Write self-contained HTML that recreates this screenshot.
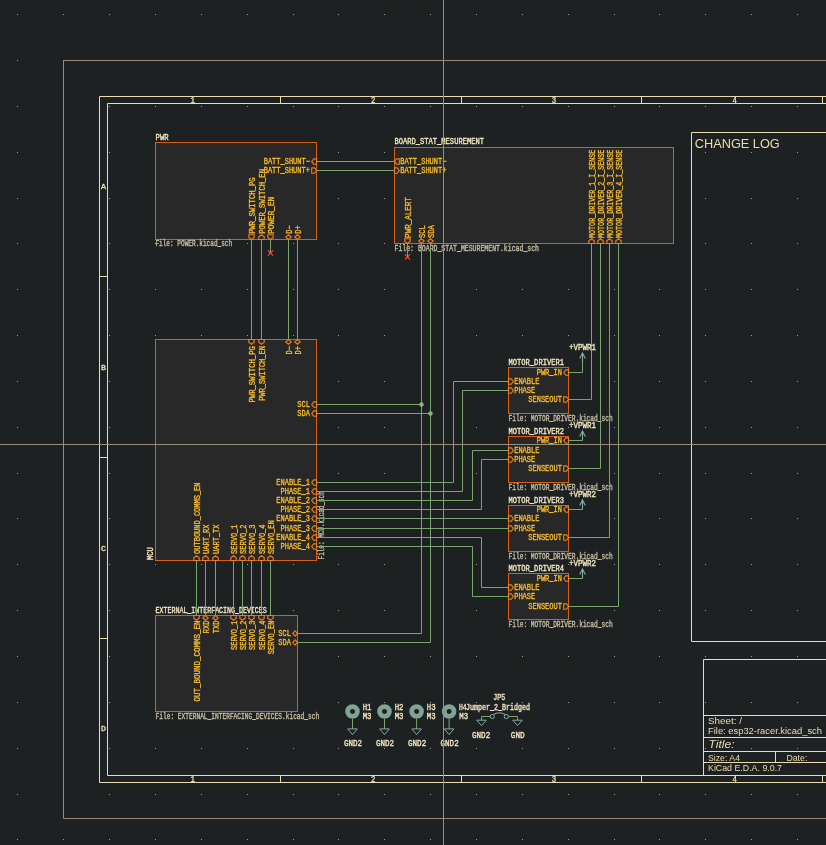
<!DOCTYPE html>
<html><head><meta charset="utf-8"><style>
html,body{margin:0;padding:0;background:#1d2122;overflow:hidden;width:826px;height:845px}
svg{display:block;will-change:transform}
</style></head><body>
<svg width="826" height="845" viewBox="0 0 826 845">
<rect x="0" y="0" width="826" height="845" fill="#1d2122"/>
<path d="M17,14h1v1h-1zM17,60h1v1h-1zM17,106h1v1h-1zM17,152h1v1h-1zM17,198h1v1h-1zM17,243h1v1h-1zM17,289h1v1h-1zM17,335h1v1h-1zM17,381h1v1h-1zM17,427h1v1h-1zM17,473h1v1h-1zM17,518h1v1h-1zM17,564h1v1h-1zM17,610h1v1h-1zM17,656h1v1h-1zM17,702h1v1h-1zM17,748h1v1h-1zM17,794h1v1h-1zM17,839h1v1h-1zM63,14h1v1h-1zM63,60h1v1h-1zM63,106h1v1h-1zM63,152h1v1h-1zM63,198h1v1h-1zM63,243h1v1h-1zM63,289h1v1h-1zM63,335h1v1h-1zM63,381h1v1h-1zM63,427h1v1h-1zM63,473h1v1h-1zM63,518h1v1h-1zM63,564h1v1h-1zM63,610h1v1h-1zM63,656h1v1h-1zM63,702h1v1h-1zM63,748h1v1h-1zM63,794h1v1h-1zM63,839h1v1h-1zM109,14h1v1h-1zM109,60h1v1h-1zM109,106h1v1h-1zM109,152h1v1h-1zM109,198h1v1h-1zM109,243h1v1h-1zM109,289h1v1h-1zM109,335h1v1h-1zM109,381h1v1h-1zM109,427h1v1h-1zM109,473h1v1h-1zM109,518h1v1h-1zM109,564h1v1h-1zM109,610h1v1h-1zM109,656h1v1h-1zM109,702h1v1h-1zM109,748h1v1h-1zM109,794h1v1h-1zM109,839h1v1h-1zM155,14h1v1h-1zM155,60h1v1h-1zM155,106h1v1h-1zM155,152h1v1h-1zM155,198h1v1h-1zM155,243h1v1h-1zM155,289h1v1h-1zM155,335h1v1h-1zM155,381h1v1h-1zM155,427h1v1h-1zM155,473h1v1h-1zM155,518h1v1h-1zM155,564h1v1h-1zM155,610h1v1h-1zM155,656h1v1h-1zM155,702h1v1h-1zM155,748h1v1h-1zM155,794h1v1h-1zM155,839h1v1h-1zM201,14h1v1h-1zM201,60h1v1h-1zM201,106h1v1h-1zM201,152h1v1h-1zM201,198h1v1h-1zM201,243h1v1h-1zM201,289h1v1h-1zM201,335h1v1h-1zM201,381h1v1h-1zM201,427h1v1h-1zM201,473h1v1h-1zM201,518h1v1h-1zM201,564h1v1h-1zM201,610h1v1h-1zM201,656h1v1h-1zM201,702h1v1h-1zM201,748h1v1h-1zM201,794h1v1h-1zM201,839h1v1h-1zM247,14h1v1h-1zM247,60h1v1h-1zM247,106h1v1h-1zM247,152h1v1h-1zM247,198h1v1h-1zM247,243h1v1h-1zM247,289h1v1h-1zM247,335h1v1h-1zM247,381h1v1h-1zM247,427h1v1h-1zM247,473h1v1h-1zM247,518h1v1h-1zM247,564h1v1h-1zM247,610h1v1h-1zM247,656h1v1h-1zM247,702h1v1h-1zM247,748h1v1h-1zM247,794h1v1h-1zM247,839h1v1h-1zM293,14h1v1h-1zM293,60h1v1h-1zM293,106h1v1h-1zM293,152h1v1h-1zM293,198h1v1h-1zM293,243h1v1h-1zM293,289h1v1h-1zM293,335h1v1h-1zM293,381h1v1h-1zM293,427h1v1h-1zM293,473h1v1h-1zM293,518h1v1h-1zM293,564h1v1h-1zM293,610h1v1h-1zM293,656h1v1h-1zM293,702h1v1h-1zM293,748h1v1h-1zM293,794h1v1h-1zM293,839h1v1h-1zM338,14h1v1h-1zM338,60h1v1h-1zM338,106h1v1h-1zM338,152h1v1h-1zM338,198h1v1h-1zM338,243h1v1h-1zM338,289h1v1h-1zM338,335h1v1h-1zM338,381h1v1h-1zM338,427h1v1h-1zM338,473h1v1h-1zM338,518h1v1h-1zM338,564h1v1h-1zM338,610h1v1h-1zM338,656h1v1h-1zM338,702h1v1h-1zM338,748h1v1h-1zM338,794h1v1h-1zM338,839h1v1h-1zM384,14h1v1h-1zM384,60h1v1h-1zM384,106h1v1h-1zM384,152h1v1h-1zM384,198h1v1h-1zM384,243h1v1h-1zM384,289h1v1h-1zM384,335h1v1h-1zM384,381h1v1h-1zM384,427h1v1h-1zM384,473h1v1h-1zM384,518h1v1h-1zM384,564h1v1h-1zM384,610h1v1h-1zM384,656h1v1h-1zM384,702h1v1h-1zM384,748h1v1h-1zM384,794h1v1h-1zM384,839h1v1h-1zM430,14h1v1h-1zM430,60h1v1h-1zM430,106h1v1h-1zM430,152h1v1h-1zM430,198h1v1h-1zM430,243h1v1h-1zM430,289h1v1h-1zM430,335h1v1h-1zM430,381h1v1h-1zM430,427h1v1h-1zM430,473h1v1h-1zM430,518h1v1h-1zM430,564h1v1h-1zM430,610h1v1h-1zM430,656h1v1h-1zM430,702h1v1h-1zM430,748h1v1h-1zM430,794h1v1h-1zM430,839h1v1h-1zM476,14h1v1h-1zM476,60h1v1h-1zM476,106h1v1h-1zM476,152h1v1h-1zM476,198h1v1h-1zM476,243h1v1h-1zM476,289h1v1h-1zM476,335h1v1h-1zM476,381h1v1h-1zM476,427h1v1h-1zM476,473h1v1h-1zM476,518h1v1h-1zM476,564h1v1h-1zM476,610h1v1h-1zM476,656h1v1h-1zM476,702h1v1h-1zM476,748h1v1h-1zM476,794h1v1h-1zM476,839h1v1h-1zM522,14h1v1h-1zM522,60h1v1h-1zM522,106h1v1h-1zM522,152h1v1h-1zM522,198h1v1h-1zM522,243h1v1h-1zM522,289h1v1h-1zM522,335h1v1h-1zM522,381h1v1h-1zM522,427h1v1h-1zM522,473h1v1h-1zM522,518h1v1h-1zM522,564h1v1h-1zM522,610h1v1h-1zM522,656h1v1h-1zM522,702h1v1h-1zM522,748h1v1h-1zM522,794h1v1h-1zM522,839h1v1h-1zM568,14h1v1h-1zM568,60h1v1h-1zM568,106h1v1h-1zM568,152h1v1h-1zM568,198h1v1h-1zM568,243h1v1h-1zM568,289h1v1h-1zM568,335h1v1h-1zM568,381h1v1h-1zM568,427h1v1h-1zM568,473h1v1h-1zM568,518h1v1h-1zM568,564h1v1h-1zM568,610h1v1h-1zM568,656h1v1h-1zM568,702h1v1h-1zM568,748h1v1h-1zM568,794h1v1h-1zM568,839h1v1h-1zM614,14h1v1h-1zM614,60h1v1h-1zM614,106h1v1h-1zM614,152h1v1h-1zM614,198h1v1h-1zM614,243h1v1h-1zM614,289h1v1h-1zM614,335h1v1h-1zM614,381h1v1h-1zM614,427h1v1h-1zM614,473h1v1h-1zM614,518h1v1h-1zM614,564h1v1h-1zM614,610h1v1h-1zM614,656h1v1h-1zM614,702h1v1h-1zM614,748h1v1h-1zM614,794h1v1h-1zM614,839h1v1h-1zM659,14h1v1h-1zM659,60h1v1h-1zM659,106h1v1h-1zM659,152h1v1h-1zM659,198h1v1h-1zM659,243h1v1h-1zM659,289h1v1h-1zM659,335h1v1h-1zM659,381h1v1h-1zM659,427h1v1h-1zM659,473h1v1h-1zM659,518h1v1h-1zM659,564h1v1h-1zM659,610h1v1h-1zM659,656h1v1h-1zM659,702h1v1h-1zM659,748h1v1h-1zM659,794h1v1h-1zM659,839h1v1h-1zM705,14h1v1h-1zM705,60h1v1h-1zM705,106h1v1h-1zM705,152h1v1h-1zM705,198h1v1h-1zM705,243h1v1h-1zM705,289h1v1h-1zM705,335h1v1h-1zM705,381h1v1h-1zM705,427h1v1h-1zM705,473h1v1h-1zM705,518h1v1h-1zM705,564h1v1h-1zM705,610h1v1h-1zM705,656h1v1h-1zM705,702h1v1h-1zM705,748h1v1h-1zM705,794h1v1h-1zM705,839h1v1h-1zM751,14h1v1h-1zM751,60h1v1h-1zM751,106h1v1h-1zM751,152h1v1h-1zM751,198h1v1h-1zM751,243h1v1h-1zM751,289h1v1h-1zM751,335h1v1h-1zM751,381h1v1h-1zM751,427h1v1h-1zM751,473h1v1h-1zM751,518h1v1h-1zM751,564h1v1h-1zM751,610h1v1h-1zM751,656h1v1h-1zM751,702h1v1h-1zM751,748h1v1h-1zM751,794h1v1h-1zM751,839h1v1h-1zM797,14h1v1h-1zM797,60h1v1h-1zM797,106h1v1h-1zM797,152h1v1h-1zM797,198h1v1h-1zM797,243h1v1h-1zM797,289h1v1h-1zM797,335h1v1h-1zM797,381h1v1h-1zM797,427h1v1h-1zM797,473h1v1h-1zM797,518h1v1h-1zM797,564h1v1h-1zM797,610h1v1h-1zM797,656h1v1h-1zM797,702h1v1h-1zM797,748h1v1h-1zM797,794h1v1h-1zM797,839h1v1h-1z" fill="#a89d88"/>
<polyline points="900,60.5 63.5,60.5 63.5,818.5 900,818.5" stroke="#978a7a" stroke-width="1.0" fill="none" stroke-linejoin="miter"/>
<polyline points="900,96.5 99.5,96.5 99.5,782.5 900,782.5" stroke="#ecdcb0" stroke-width="1.0" fill="none" stroke-linejoin="miter"/>
<polyline points="900,103.5 107.5,103.5 107.5,775.5 900,775.5" stroke="#ecdcb0" stroke-width="1.0" fill="none" stroke-linejoin="miter"/>
<line x1="280.5" y1="96.5" x2="280.5" y2="103.5" stroke="#ecdcb0" stroke-width="1.0"/>
<line x1="280.5" y1="775.5" x2="280.5" y2="782.5" stroke="#ecdcb0" stroke-width="1.0"/>
<line x1="461.5" y1="96.5" x2="461.5" y2="103.5" stroke="#ecdcb0" stroke-width="1.0"/>
<line x1="461.5" y1="775.5" x2="461.5" y2="782.5" stroke="#ecdcb0" stroke-width="1.0"/>
<line x1="641.5" y1="96.5" x2="641.5" y2="103.5" stroke="#ecdcb0" stroke-width="1.0"/>
<line x1="641.5" y1="775.5" x2="641.5" y2="782.5" stroke="#ecdcb0" stroke-width="1.0"/>
<line x1="822.5" y1="96.5" x2="822.5" y2="103.5" stroke="#ecdcb0" stroke-width="1.0"/>
<line x1="822.5" y1="775.5" x2="822.5" y2="782.5" stroke="#ecdcb0" stroke-width="1.0"/>
<line x1="99.5" y1="276.5" x2="107.5" y2="276.5" stroke="#ecdcb0" stroke-width="1.0"/>
<line x1="99.5" y1="457.5" x2="107.5" y2="457.5" stroke="#ecdcb0" stroke-width="1.0"/>
<line x1="99.5" y1="638.5" x2="107.5" y2="638.5" stroke="#ecdcb0" stroke-width="1.0"/>
<text x="192.6" y="102.9" fill="#ecdcb0" stroke="#ecdcb0" stroke-width="0.35" font-family="Liberation Mono" font-size="8.2" font-weight="normal" font-style="normal" text-anchor="middle" textLength="4.4" lengthAdjust="spacingAndGlyphs">1</text>
<text x="192.6" y="781.9" fill="#ecdcb0" stroke="#ecdcb0" stroke-width="0.35" font-family="Liberation Mono" font-size="8.2" font-weight="normal" font-style="normal" text-anchor="middle" textLength="4.4" lengthAdjust="spacingAndGlyphs">1</text>
<text x="373.1" y="102.9" fill="#ecdcb0" stroke="#ecdcb0" stroke-width="0.35" font-family="Liberation Mono" font-size="8.2" font-weight="normal" font-style="normal" text-anchor="middle" textLength="4.4" lengthAdjust="spacingAndGlyphs">2</text>
<text x="373.1" y="781.9" fill="#ecdcb0" stroke="#ecdcb0" stroke-width="0.35" font-family="Liberation Mono" font-size="8.2" font-weight="normal" font-style="normal" text-anchor="middle" textLength="4.4" lengthAdjust="spacingAndGlyphs">2</text>
<text x="553.9" y="102.9" fill="#ecdcb0" stroke="#ecdcb0" stroke-width="0.35" font-family="Liberation Mono" font-size="8.2" font-weight="normal" font-style="normal" text-anchor="middle" textLength="4.4" lengthAdjust="spacingAndGlyphs">3</text>
<text x="553.9" y="781.9" fill="#ecdcb0" stroke="#ecdcb0" stroke-width="0.35" font-family="Liberation Mono" font-size="8.2" font-weight="normal" font-style="normal" text-anchor="middle" textLength="4.4" lengthAdjust="spacingAndGlyphs">3</text>
<text x="734.6" y="102.9" fill="#ecdcb0" stroke="#ecdcb0" stroke-width="0.35" font-family="Liberation Mono" font-size="8.2" font-weight="normal" font-style="normal" text-anchor="middle" textLength="4.4" lengthAdjust="spacingAndGlyphs">4</text>
<text x="734.6" y="781.9" fill="#ecdcb0" stroke="#ecdcb0" stroke-width="0.35" font-family="Liberation Mono" font-size="8.2" font-weight="normal" font-style="normal" text-anchor="middle" textLength="4.4" lengthAdjust="spacingAndGlyphs">4</text>
<text x="103.5" y="189.2" fill="#ecdcb0" stroke="#ecdcb0" stroke-width="0.35" font-family="Liberation Mono" font-size="7.8" font-weight="normal" font-style="normal" text-anchor="middle" textLength="5" lengthAdjust="spacingAndGlyphs">A</text>
<text x="103.5" y="369.5" fill="#ecdcb0" stroke="#ecdcb0" stroke-width="0.35" font-family="Liberation Mono" font-size="7.8" font-weight="normal" font-style="normal" text-anchor="middle" textLength="5" lengthAdjust="spacingAndGlyphs">B</text>
<text x="103.5" y="550.5" fill="#ecdcb0" stroke="#ecdcb0" stroke-width="0.35" font-family="Liberation Mono" font-size="7.8" font-weight="normal" font-style="normal" text-anchor="middle" textLength="5" lengthAdjust="spacingAndGlyphs">C</text>
<text x="103.5" y="731" fill="#ecdcb0" stroke="#ecdcb0" stroke-width="0.35" font-family="Liberation Mono" font-size="7.8" font-weight="normal" font-style="normal" text-anchor="middle" textLength="5" lengthAdjust="spacingAndGlyphs">D</text>
<polyline points="900,132.5 691.5,132.5 691.5,641.5 900,641.5" stroke="#ecdcb0" stroke-width="1.0" fill="none" stroke-linejoin="miter"/>
<text x="694.8" y="148" fill="#ecdcb0" font-family="Liberation Sans" font-size="13.5" font-weight="normal" font-style="normal" text-anchor="start" textLength="85" lengthAdjust="spacingAndGlyphs">CHANGE LOG</text>
<polyline points="900,659.5 703.5,659.5 703.5,775.5" stroke="#ecdcb0" stroke-width="1.0" fill="none" stroke-linejoin="miter"/>
<line x1="703.5" y1="715.5" x2="900" y2="715.5" stroke="#ecdcb0" stroke-width="1.0"/>
<line x1="703.5" y1="737.5" x2="900" y2="737.5" stroke="#ecdcb0" stroke-width="1.0"/>
<line x1="703.5" y1="751.5" x2="900" y2="751.5" stroke="#ecdcb0" stroke-width="1.0"/>
<line x1="703.5" y1="762.5" x2="900" y2="762.5" stroke="#ecdcb0" stroke-width="1.0"/>
<line x1="775.5" y1="751.5" x2="775.5" y2="762.5" stroke="#ecdcb0" stroke-width="1.0"/>
<text x="708" y="724.1" fill="#ecdcb0" font-family="Liberation Sans" font-size="8.3" font-weight="normal" font-style="normal" text-anchor="start" textLength="34" lengthAdjust="spacingAndGlyphs">Sheet: /</text>
<text x="708" y="733.9" fill="#ecdcb0" font-family="Liberation Sans" font-size="8.3" font-weight="normal" font-style="normal" text-anchor="start" textLength="114" lengthAdjust="spacingAndGlyphs">File: esp32-racer.kicad_sch</text>
<text x="708.5" y="748" fill="#ecdcb0" font-family="Liberation Sans" font-size="11.5" font-weight="normal" font-style="italic" text-anchor="start" textLength="26" lengthAdjust="spacingAndGlyphs">Title:</text>
<text x="708" y="760.8" fill="#ecdcb0" font-family="Liberation Sans" font-size="8.3" font-weight="normal" font-style="normal" text-anchor="start" textLength="32" lengthAdjust="spacingAndGlyphs">Size: A4</text>
<text x="786.4" y="760.8" fill="#ecdcb0" font-family="Liberation Sans" font-size="8.3" font-weight="normal" font-style="normal" text-anchor="start" textLength="21" lengthAdjust="spacingAndGlyphs">Date:</text>
<text x="708" y="770.8" fill="#ecdcb0" font-family="Liberation Sans" font-size="8.3" font-weight="normal" font-style="normal" text-anchor="start" textLength="74" lengthAdjust="spacingAndGlyphs">KiCad E.D.A. 9.0.7</text>
<rect x="155.5" y="142.5" width="161" height="97" stroke="#d95e0f" stroke-width="1.0" fill="#282828"/>
<text x="155.6" y="140" fill="#f2e6c2" stroke="#f2e6c2" stroke-width="0.35" font-family="Liberation Mono" font-size="8.6" font-weight="normal" font-style="normal" text-anchor="start" textLength="12.9" lengthAdjust="spacingAndGlyphs">PWR</text>
<text x="155.4" y="246.2" fill="#c8bea2" stroke="#c8bea2" stroke-width="0.35" font-family="Liberation Mono" font-size="8.6" font-weight="normal" font-style="normal" text-anchor="start" textLength="76.8" lengthAdjust="spacingAndGlyphs">File: POWER.kicad_sch</text>
<polygon points="316.5,158.8 313.72,158.8 311.7,161.5 313.72,164.2 316.5,164.2" stroke="#f07c1c" stroke-width="1.15" fill="none" stroke-linejoin="miter"/>
<text x="309.9" y="164.1" fill="#f8bc2c" stroke="#f8bc2c" stroke-width="0.35" font-family="Liberation Mono" font-size="8.6" font-weight="normal" font-style="normal" text-anchor="end" textLength="46.2" lengthAdjust="spacingAndGlyphs">BATT_SHUNT−</text>
<polygon points="311.7,167.8 314.48,167.8 316.5,170.5 314.48,173.2 311.7,173.2" stroke="#f07c1c" stroke-width="1.15" fill="none" stroke-linejoin="miter"/>
<text x="309.9" y="173.1" fill="#f8bc2c" stroke="#f8bc2c" stroke-width="0.35" font-family="Liberation Mono" font-size="8.6" font-weight="normal" font-style="normal" text-anchor="end" textLength="46.2" lengthAdjust="spacingAndGlyphs">BATT_SHUNT+</text>
<polygon points="248.8,234.7 248.8,237.48 251.5,239.5 254.2,237.48 254.2,234.7" stroke="#f07c1c" stroke-width="1.15" fill="none" stroke-linejoin="miter"/>
<text x="254.8" y="233.8" fill="#f8bc2c" stroke="#f8bc2c" stroke-width="0.35" font-family="Liberation Mono" font-size="8.6" font-weight="normal" font-style="normal" text-anchor="start" textLength="56.4" lengthAdjust="spacingAndGlyphs" transform="rotate(-90 254.8 233.8)">PWR_SWITCH_PG</text>
<polygon points="258.8,239.5 258.8,236.72 261.5,234.7 264.2,236.72 264.2,239.5" stroke="#f07c1c" stroke-width="1.15" fill="none" stroke-linejoin="miter"/>
<text x="264.8" y="233.8" fill="#f8bc2c" stroke="#f8bc2c" stroke-width="0.35" font-family="Liberation Mono" font-size="8.6" font-weight="normal" font-style="normal" text-anchor="start" textLength="64.8" lengthAdjust="spacingAndGlyphs" transform="rotate(-90 264.8 233.8)">POWER_SWITCH_EN</text>
<polygon points="267.8,234.7 267.8,237.48 270.5,239.5 273.2,237.48 273.2,234.7" stroke="#f07c1c" stroke-width="1.15" fill="none" stroke-linejoin="miter"/>
<text x="273.8" y="233.8" fill="#f8bc2c" stroke="#f8bc2c" stroke-width="0.35" font-family="Liberation Mono" font-size="8.6" font-weight="normal" font-style="normal" text-anchor="start" textLength="37" lengthAdjust="spacingAndGlyphs" transform="rotate(-90 273.8 233.8)">POWER_EN</text>
<polygon points="288.5,239.5 285.8,237.1 288.5,234.7 291.2,237.1" stroke="#f07c1c" stroke-width="1.15" fill="none" stroke-linejoin="miter"/>
<text x="291.8" y="233.8" fill="#f8bc2c" stroke="#f8bc2c" stroke-width="0.35" font-family="Liberation Mono" font-size="8.6" font-weight="normal" font-style="normal" text-anchor="start" textLength="8.4" lengthAdjust="spacingAndGlyphs" transform="rotate(-90 291.8 233.8)">D−</text>
<polygon points="297.5,239.5 294.8,237.1 297.5,234.7 300.2,237.1" stroke="#f07c1c" stroke-width="1.15" fill="none" stroke-linejoin="miter"/>
<text x="300.8" y="233.8" fill="#f8bc2c" stroke="#f8bc2c" stroke-width="0.35" font-family="Liberation Mono" font-size="8.6" font-weight="normal" font-style="normal" text-anchor="start" textLength="8.4" lengthAdjust="spacingAndGlyphs" transform="rotate(-90 300.8 233.8)">D+</text>
<rect x="394.5" y="147.5" width="279" height="96" stroke="#d95e0f" stroke-width="1.0" fill="#282828"/>
<text x="394.5" y="144.2" fill="#f2e6c2" stroke="#f2e6c2" stroke-width="0.35" font-family="Liberation Mono" font-size="8.6" font-weight="normal" font-style="normal" text-anchor="start" textLength="89.46" lengthAdjust="spacingAndGlyphs">BOARD_STAT_MESUREMENT</text>
<text x="394.5" y="250.6" fill="#c8bea2" stroke="#c8bea2" stroke-width="0.35" font-family="Liberation Mono" font-size="8.6" font-weight="normal" font-style="normal" text-anchor="start" textLength="144.5" lengthAdjust="spacingAndGlyphs">File: BOARD_STAT_MESUREMENT.kicad_sch</text>
<polygon points="399.3,158.8 396.52,158.8 394.5,161.5 396.52,164.2 399.3,164.2" stroke="#f07c1c" stroke-width="1.15" fill="none" stroke-linejoin="miter"/>
<text x="400.2" y="164.1" fill="#f8bc2c" stroke="#f8bc2c" stroke-width="0.35" font-family="Liberation Mono" font-size="8.6" font-weight="normal" font-style="normal" text-anchor="start" textLength="46.2" lengthAdjust="spacingAndGlyphs">BATT_SHUNT−</text>
<polygon points="394.5,167.8 397.28,167.8 399.3,170.5 397.28,173.2 394.5,173.2" stroke="#f07c1c" stroke-width="1.15" fill="none" stroke-linejoin="miter"/>
<text x="400.2" y="173.1" fill="#f8bc2c" stroke="#f8bc2c" stroke-width="0.35" font-family="Liberation Mono" font-size="8.6" font-weight="normal" font-style="normal" text-anchor="start" textLength="46.2" lengthAdjust="spacingAndGlyphs">BATT_SHUNT+</text>
<polygon points="404.8,238.7 404.8,241.48 407.5,243.5 410.2,241.48 410.2,238.7" stroke="#f07c1c" stroke-width="1.15" fill="none" stroke-linejoin="miter"/>
<text x="410.8" y="237.9" fill="#f8bc2c" stroke="#f8bc2c" stroke-width="0.35" font-family="Liberation Mono" font-size="8.6" font-weight="normal" font-style="normal" text-anchor="start" textLength="40.8" lengthAdjust="spacingAndGlyphs" transform="rotate(-90 410.8 237.9)">PWR_ALERT</text>
<polygon points="421.5,243.5 418.8,241.1 421.5,238.7 424.2,241.1" stroke="#f07c1c" stroke-width="1.15" fill="none" stroke-linejoin="miter"/>
<text x="424.8" y="237.9" fill="#f8bc2c" stroke="#f8bc2c" stroke-width="0.35" font-family="Liberation Mono" font-size="8.6" font-weight="normal" font-style="normal" text-anchor="start" textLength="12.6" lengthAdjust="spacingAndGlyphs" transform="rotate(-90 424.8 237.9)">SCL</text>
<polygon points="430.5,243.5 427.8,241.1 430.5,238.7 433.2,241.1" stroke="#f07c1c" stroke-width="1.15" fill="none" stroke-linejoin="miter"/>
<text x="433.8" y="237.9" fill="#f8bc2c" stroke="#f8bc2c" stroke-width="0.35" font-family="Liberation Mono" font-size="8.6" font-weight="normal" font-style="normal" text-anchor="start" textLength="12.6" lengthAdjust="spacingAndGlyphs" transform="rotate(-90 433.8 237.9)">SDA</text>
<polygon points="588.8,243.5 588.8,240.72 591.5,238.7 594.2,240.72 594.2,243.5" stroke="#f07c1c" stroke-width="1.15" fill="none" stroke-linejoin="miter"/>
<text x="594.8" y="237.9" fill="#f8bc2c" stroke="#f8bc2c" stroke-width="0.35" font-family="Liberation Mono" font-size="8.6" font-weight="normal" font-style="normal" text-anchor="start" textLength="88.2" lengthAdjust="spacingAndGlyphs" transform="rotate(-90 594.8 237.9)">MOTOR_DRIVER_1_I_SENSE</text>
<polygon points="597.8,243.5 597.8,240.72 600.5,238.7 603.2,240.72 603.2,243.5" stroke="#f07c1c" stroke-width="1.15" fill="none" stroke-linejoin="miter"/>
<text x="603.8" y="237.9" fill="#f8bc2c" stroke="#f8bc2c" stroke-width="0.35" font-family="Liberation Mono" font-size="8.6" font-weight="normal" font-style="normal" text-anchor="start" textLength="88.2" lengthAdjust="spacingAndGlyphs" transform="rotate(-90 603.8 237.9)">MOTOR_DRIVER_2_I_SENSE</text>
<polygon points="606.8,243.5 606.8,240.72 609.5,238.7 612.2,240.72 612.2,243.5" stroke="#f07c1c" stroke-width="1.15" fill="none" stroke-linejoin="miter"/>
<text x="612.8" y="237.9" fill="#f8bc2c" stroke="#f8bc2c" stroke-width="0.35" font-family="Liberation Mono" font-size="8.6" font-weight="normal" font-style="normal" text-anchor="start" textLength="88.2" lengthAdjust="spacingAndGlyphs" transform="rotate(-90 612.8 237.9)">MOTOR_DRIVER_3_I_SENSE</text>
<polygon points="615.8,243.5 615.8,240.72 618.5,238.7 621.2,240.72 621.2,243.5" stroke="#f07c1c" stroke-width="1.15" fill="none" stroke-linejoin="miter"/>
<text x="621.8" y="237.9" fill="#f8bc2c" stroke="#f8bc2c" stroke-width="0.35" font-family="Liberation Mono" font-size="8.6" font-weight="normal" font-style="normal" text-anchor="start" textLength="88.2" lengthAdjust="spacingAndGlyphs" transform="rotate(-90 621.8 237.9)">MOTOR_DRIVER_4_I_SENSE</text>
<rect x="155.5" y="339.5" width="161" height="221" stroke="#d95e0f" stroke-width="1.0" fill="#282828"/>
<text x="153.2" y="560" fill="#f2e6c2" stroke="#f2e6c2" stroke-width="0.35" font-family="Liberation Mono" font-size="8.6" font-weight="normal" font-style="normal" text-anchor="start" textLength="12.9" lengthAdjust="spacingAndGlyphs" transform="rotate(-90 153.2 560)">MCU</text>
<text x="323.6" y="559.4" fill="#c8bea2" stroke="#c8bea2" stroke-width="0.35" font-family="Liberation Mono" font-size="8.6" font-weight="normal" font-style="normal" text-anchor="start" textLength="68.2" lengthAdjust="spacingAndGlyphs" transform="rotate(-90 323.6 559.4)">File: MCU.kicad_sch</text>
<polygon points="248.8,339.5 248.8,342.28 251.5,344.3 254.2,342.28 254.2,339.5" stroke="#f07c1c" stroke-width="1.15" fill="none" stroke-linejoin="miter"/>
<text x="254.8" y="346.1" fill="#f8bc2c" stroke="#f8bc2c" stroke-width="0.35" font-family="Liberation Mono" font-size="8.6" font-weight="normal" font-style="normal" text-anchor="end" textLength="56.4" lengthAdjust="spacingAndGlyphs" transform="rotate(-90 254.8 346.1)">PWR_SWITCH_PG</text>
<polygon points="258.8,339.5 258.8,342.28 261.5,344.3 264.2,342.28 264.2,339.5" stroke="#f07c1c" stroke-width="1.15" fill="none" stroke-linejoin="miter"/>
<text x="264.8" y="346.1" fill="#f8bc2c" stroke="#f8bc2c" stroke-width="0.35" font-family="Liberation Mono" font-size="8.6" font-weight="normal" font-style="normal" text-anchor="end" textLength="54.6" lengthAdjust="spacingAndGlyphs" transform="rotate(-90 264.8 346.1)">PWR_SWITCH_EN</text>
<polygon points="288.5,339.5 285.8,341.9 288.5,344.3 291.2,341.9" stroke="#f07c1c" stroke-width="1.15" fill="none" stroke-linejoin="miter"/>
<text x="291.8" y="346.1" fill="#f8bc2c" stroke="#f8bc2c" stroke-width="0.35" font-family="Liberation Mono" font-size="8.6" font-weight="normal" font-style="normal" text-anchor="end" textLength="8.4" lengthAdjust="spacingAndGlyphs" transform="rotate(-90 291.8 346.1)">D−</text>
<polygon points="297.5,339.5 294.8,341.9 297.5,344.3 300.2,341.9" stroke="#f07c1c" stroke-width="1.15" fill="none" stroke-linejoin="miter"/>
<text x="300.8" y="346.1" fill="#f8bc2c" stroke="#f8bc2c" stroke-width="0.35" font-family="Liberation Mono" font-size="8.6" font-weight="normal" font-style="normal" text-anchor="end" textLength="8.4" lengthAdjust="spacingAndGlyphs" transform="rotate(-90 300.8 346.1)">D+</text>
<polygon points="316.5,401.8 313.72,401.8 311.7,404.5 313.72,407.2 316.5,407.2" stroke="#f07c1c" stroke-width="1.15" fill="none" stroke-linejoin="miter"/>
<text x="309.9" y="407.1" fill="#f8bc2c" stroke="#f8bc2c" stroke-width="0.35" font-family="Liberation Mono" font-size="8.6" font-weight="normal" font-style="normal" text-anchor="end" textLength="12.6" lengthAdjust="spacingAndGlyphs">SCL</text>
<polygon points="316.5,410.8 313.72,410.8 311.7,413.5 313.72,416.2 316.5,416.2" stroke="#f07c1c" stroke-width="1.15" fill="none" stroke-linejoin="miter"/>
<text x="309.9" y="416.1" fill="#f8bc2c" stroke="#f8bc2c" stroke-width="0.35" font-family="Liberation Mono" font-size="8.6" font-weight="normal" font-style="normal" text-anchor="end" textLength="12.6" lengthAdjust="spacingAndGlyphs">SDA</text>
<polygon points="316.5,479.8 313.72,479.8 311.7,482.5 313.72,485.2 316.5,485.2" stroke="#f07c1c" stroke-width="1.15" fill="none" stroke-linejoin="miter"/>
<text x="309.9" y="485.1" fill="#f8bc2c" stroke="#f8bc2c" stroke-width="0.35" font-family="Liberation Mono" font-size="8.6" font-weight="normal" font-style="normal" text-anchor="end" textLength="33.6" lengthAdjust="spacingAndGlyphs">ENABLE_1</text>
<polygon points="316.5,488.8 313.72,488.8 311.7,491.5 313.72,494.2 316.5,494.2" stroke="#f07c1c" stroke-width="1.15" fill="none" stroke-linejoin="miter"/>
<text x="309.9" y="494.1" fill="#f8bc2c" stroke="#f8bc2c" stroke-width="0.35" font-family="Liberation Mono" font-size="8.6" font-weight="normal" font-style="normal" text-anchor="end" textLength="29.4" lengthAdjust="spacingAndGlyphs">PHASE_1</text>
<polygon points="316.5,497.8 313.72,497.8 311.7,500.5 313.72,503.2 316.5,503.2" stroke="#f07c1c" stroke-width="1.15" fill="none" stroke-linejoin="miter"/>
<text x="309.9" y="503.1" fill="#f8bc2c" stroke="#f8bc2c" stroke-width="0.35" font-family="Liberation Mono" font-size="8.6" font-weight="normal" font-style="normal" text-anchor="end" textLength="33.6" lengthAdjust="spacingAndGlyphs">ENABLE_2</text>
<polygon points="316.5,506.8 313.72,506.8 311.7,509.5 313.72,512.2 316.5,512.2" stroke="#f07c1c" stroke-width="1.15" fill="none" stroke-linejoin="miter"/>
<text x="309.9" y="512.1" fill="#f8bc2c" stroke="#f8bc2c" stroke-width="0.35" font-family="Liberation Mono" font-size="8.6" font-weight="normal" font-style="normal" text-anchor="end" textLength="29.4" lengthAdjust="spacingAndGlyphs">PHASE_2</text>
<polygon points="316.5,515.8 313.72,515.8 311.7,518.5 313.72,521.2 316.5,521.2" stroke="#f07c1c" stroke-width="1.15" fill="none" stroke-linejoin="miter"/>
<text x="309.9" y="521.1" fill="#f8bc2c" stroke="#f8bc2c" stroke-width="0.35" font-family="Liberation Mono" font-size="8.6" font-weight="normal" font-style="normal" text-anchor="end" textLength="33.6" lengthAdjust="spacingAndGlyphs">ENABLE_3</text>
<polygon points="316.5,525.8 313.72,525.8 311.7,528.5 313.72,531.2 316.5,531.2" stroke="#f07c1c" stroke-width="1.15" fill="none" stroke-linejoin="miter"/>
<text x="309.9" y="531.1" fill="#f8bc2c" stroke="#f8bc2c" stroke-width="0.35" font-family="Liberation Mono" font-size="8.6" font-weight="normal" font-style="normal" text-anchor="end" textLength="29.4" lengthAdjust="spacingAndGlyphs">PHASE_3</text>
<polygon points="316.5,534.8 313.72,534.8 311.7,537.5 313.72,540.2 316.5,540.2" stroke="#f07c1c" stroke-width="1.15" fill="none" stroke-linejoin="miter"/>
<text x="309.9" y="540.1" fill="#f8bc2c" stroke="#f8bc2c" stroke-width="0.35" font-family="Liberation Mono" font-size="8.6" font-weight="normal" font-style="normal" text-anchor="end" textLength="33.6" lengthAdjust="spacingAndGlyphs">ENABLE_4</text>
<polygon points="316.5,543.8 313.72,543.8 311.7,546.5 313.72,549.2 316.5,549.2" stroke="#f07c1c" stroke-width="1.15" fill="none" stroke-linejoin="miter"/>
<text x="309.9" y="549.1" fill="#f8bc2c" stroke="#f8bc2c" stroke-width="0.35" font-family="Liberation Mono" font-size="8.6" font-weight="normal" font-style="normal" text-anchor="end" textLength="29.4" lengthAdjust="spacingAndGlyphs">PHASE_4</text>
<polygon points="193.8,560.5 193.8,557.72 196.5,555.7 199.2,557.72 199.2,560.5" stroke="#f07c1c" stroke-width="1.15" fill="none" stroke-linejoin="miter"/>
<text x="199.8" y="553.9" fill="#f8bc2c" stroke="#f8bc2c" stroke-width="0.35" font-family="Liberation Mono" font-size="8.6" font-weight="normal" font-style="normal" text-anchor="start" textLength="71.4" lengthAdjust="spacingAndGlyphs" transform="rotate(-90 199.8 553.9)">OUTBOUND_COMMS_EN</text>
<polygon points="202.8,560.5 202.8,557.72 205.5,555.7 208.2,557.72 208.2,560.5" stroke="#f07c1c" stroke-width="1.15" fill="none" stroke-linejoin="miter"/>
<text x="208.8" y="553.9" fill="#f8bc2c" stroke="#f8bc2c" stroke-width="0.35" font-family="Liberation Mono" font-size="8.6" font-weight="normal" font-style="normal" text-anchor="start" textLength="29.4" lengthAdjust="spacingAndGlyphs" transform="rotate(-90 208.8 553.9)">UART_RX</text>
<polygon points="212.8,560.5 212.8,557.72 215.5,555.7 218.2,557.72 218.2,560.5" stroke="#f07c1c" stroke-width="1.15" fill="none" stroke-linejoin="miter"/>
<text x="218.8" y="553.9" fill="#f8bc2c" stroke="#f8bc2c" stroke-width="0.35" font-family="Liberation Mono" font-size="8.6" font-weight="normal" font-style="normal" text-anchor="start" textLength="29.4" lengthAdjust="spacingAndGlyphs" transform="rotate(-90 218.8 553.9)">UART_TX</text>
<polygon points="230.8,560.5 230.8,557.72 233.5,555.7 236.2,557.72 236.2,560.5" stroke="#f07c1c" stroke-width="1.15" fill="none" stroke-linejoin="miter"/>
<text x="236.8" y="553.9" fill="#f8bc2c" stroke="#f8bc2c" stroke-width="0.35" font-family="Liberation Mono" font-size="8.6" font-weight="normal" font-style="normal" text-anchor="start" textLength="29.4" lengthAdjust="spacingAndGlyphs" transform="rotate(-90 236.8 553.9)">SERVO_1</text>
<polygon points="239.8,560.5 239.8,557.72 242.5,555.7 245.2,557.72 245.2,560.5" stroke="#f07c1c" stroke-width="1.15" fill="none" stroke-linejoin="miter"/>
<text x="245.8" y="553.9" fill="#f8bc2c" stroke="#f8bc2c" stroke-width="0.35" font-family="Liberation Mono" font-size="8.6" font-weight="normal" font-style="normal" text-anchor="start" textLength="29.4" lengthAdjust="spacingAndGlyphs" transform="rotate(-90 245.8 553.9)">SERVO_2</text>
<polygon points="248.8,560.5 248.8,557.72 251.5,555.7 254.2,557.72 254.2,560.5" stroke="#f07c1c" stroke-width="1.15" fill="none" stroke-linejoin="miter"/>
<text x="254.8" y="553.9" fill="#f8bc2c" stroke="#f8bc2c" stroke-width="0.35" font-family="Liberation Mono" font-size="8.6" font-weight="normal" font-style="normal" text-anchor="start" textLength="29.4" lengthAdjust="spacingAndGlyphs" transform="rotate(-90 254.8 553.9)">SERVO_3</text>
<polygon points="258.8,560.5 258.8,557.72 261.5,555.7 264.2,557.72 264.2,560.5" stroke="#f07c1c" stroke-width="1.15" fill="none" stroke-linejoin="miter"/>
<text x="264.8" y="553.9" fill="#f8bc2c" stroke="#f8bc2c" stroke-width="0.35" font-family="Liberation Mono" font-size="8.6" font-weight="normal" font-style="normal" text-anchor="start" textLength="29.4" lengthAdjust="spacingAndGlyphs" transform="rotate(-90 264.8 553.9)">SERVO_4</text>
<polygon points="267.8,560.5 267.8,557.72 270.5,555.7 273.2,557.72 273.2,560.5" stroke="#f07c1c" stroke-width="1.15" fill="none" stroke-linejoin="miter"/>
<text x="273.8" y="553.9" fill="#f8bc2c" stroke="#f8bc2c" stroke-width="0.35" font-family="Liberation Mono" font-size="8.6" font-weight="normal" font-style="normal" text-anchor="start" textLength="33.6" lengthAdjust="spacingAndGlyphs" transform="rotate(-90 273.8 553.9)">SERVO_EN</text>
<rect x="155.5" y="615.5" width="142" height="96" stroke="#d95e0f" stroke-width="1.0" fill="#282828"/>
<text x="155.6" y="612.8" fill="#f2e6c2" stroke="#f2e6c2" stroke-width="0.35" font-family="Liberation Mono" font-size="8.6" font-weight="normal" font-style="normal" text-anchor="start" textLength="111.16" lengthAdjust="spacingAndGlyphs">EXTERNAL_INTERFACING_DEVICES</text>
<text x="155.5" y="718.6" fill="#c8bea2" stroke="#c8bea2" stroke-width="0.35" font-family="Liberation Mono" font-size="8.6" font-weight="normal" font-style="normal" text-anchor="start" textLength="163.68" lengthAdjust="spacingAndGlyphs">File: EXTERNAL_INTERFACING_DEVICES.kicad_sch</text>
<polygon points="193.8,615.5 193.8,618.28 196.5,620.3 199.2,618.28 199.2,615.5" stroke="#f07c1c" stroke-width="1.15" fill="none" stroke-linejoin="miter"/>
<text x="199.8" y="620.6" fill="#f8bc2c" stroke="#f8bc2c" stroke-width="0.35" font-family="Liberation Mono" font-size="8.6" font-weight="normal" font-style="normal" text-anchor="end" textLength="81" lengthAdjust="spacingAndGlyphs" transform="rotate(-90 199.8 620.6)">OUT_BOUND_COMMS_EN</text>
<polygon points="205.5,615.5 202.8,617.9 205.5,620.3 208.2,617.9" stroke="#f07c1c" stroke-width="1.15" fill="none" stroke-linejoin="miter"/>
<text x="208.8" y="620.6" fill="#f8bc2c" stroke="#f8bc2c" stroke-width="0.35" font-family="Liberation Mono" font-size="8.6" font-weight="normal" font-style="normal" text-anchor="end" textLength="12.6" lengthAdjust="spacingAndGlyphs" transform="rotate(-90 208.8 620.6)">RXD</text>
<polygon points="215.5,615.5 212.8,617.9 215.5,620.3 218.2,617.9" stroke="#f07c1c" stroke-width="1.15" fill="none" stroke-linejoin="miter"/>
<text x="218.8" y="620.6" fill="#f8bc2c" stroke="#f8bc2c" stroke-width="0.35" font-family="Liberation Mono" font-size="8.6" font-weight="normal" font-style="normal" text-anchor="end" textLength="12.6" lengthAdjust="spacingAndGlyphs" transform="rotate(-90 218.8 620.6)">TXD</text>
<polygon points="230.8,615.5 230.8,618.28 233.5,620.3 236.2,618.28 236.2,615.5" stroke="#f07c1c" stroke-width="1.15" fill="none" stroke-linejoin="miter"/>
<text x="236.8" y="620.6" fill="#f8bc2c" stroke="#f8bc2c" stroke-width="0.35" font-family="Liberation Mono" font-size="8.6" font-weight="normal" font-style="normal" text-anchor="end" textLength="29.4" lengthAdjust="spacingAndGlyphs" transform="rotate(-90 236.8 620.6)">SERVO_1</text>
<polygon points="239.8,615.5 239.8,618.28 242.5,620.3 245.2,618.28 245.2,615.5" stroke="#f07c1c" stroke-width="1.15" fill="none" stroke-linejoin="miter"/>
<text x="245.8" y="620.6" fill="#f8bc2c" stroke="#f8bc2c" stroke-width="0.35" font-family="Liberation Mono" font-size="8.6" font-weight="normal" font-style="normal" text-anchor="end" textLength="29.4" lengthAdjust="spacingAndGlyphs" transform="rotate(-90 245.8 620.6)">SERVO_2</text>
<polygon points="248.8,615.5 248.8,618.28 251.5,620.3 254.2,618.28 254.2,615.5" stroke="#f07c1c" stroke-width="1.15" fill="none" stroke-linejoin="miter"/>
<text x="254.8" y="620.6" fill="#f8bc2c" stroke="#f8bc2c" stroke-width="0.35" font-family="Liberation Mono" font-size="8.6" font-weight="normal" font-style="normal" text-anchor="end" textLength="29.4" lengthAdjust="spacingAndGlyphs" transform="rotate(-90 254.8 620.6)">SERVO_3</text>
<polygon points="258.8,615.5 258.8,618.28 261.5,620.3 264.2,618.28 264.2,615.5" stroke="#f07c1c" stroke-width="1.15" fill="none" stroke-linejoin="miter"/>
<text x="264.8" y="620.6" fill="#f8bc2c" stroke="#f8bc2c" stroke-width="0.35" font-family="Liberation Mono" font-size="8.6" font-weight="normal" font-style="normal" text-anchor="end" textLength="29.4" lengthAdjust="spacingAndGlyphs" transform="rotate(-90 264.8 620.6)">SERVO_4</text>
<polygon points="267.8,615.5 267.8,618.28 270.5,620.3 273.2,618.28 273.2,615.5" stroke="#f07c1c" stroke-width="1.15" fill="none" stroke-linejoin="miter"/>
<text x="273.8" y="620.6" fill="#f8bc2c" stroke="#f8bc2c" stroke-width="0.35" font-family="Liberation Mono" font-size="8.6" font-weight="normal" font-style="normal" text-anchor="end" textLength="33.6" lengthAdjust="spacingAndGlyphs" transform="rotate(-90 273.8 620.6)">SERVO_EN</text>
<polygon points="297.5,633.5 295.1,630.8 292.7,633.5 295.1,636.2" stroke="#f07c1c" stroke-width="1.15" fill="none" stroke-linejoin="miter"/>
<text x="290.9" y="636.1" fill="#f8bc2c" stroke="#f8bc2c" stroke-width="0.35" font-family="Liberation Mono" font-size="8.6" font-weight="normal" font-style="normal" text-anchor="end" textLength="12.6" lengthAdjust="spacingAndGlyphs">SCL</text>
<polygon points="297.5,642.5 295.1,639.8 292.7,642.5 295.1,645.2" stroke="#f07c1c" stroke-width="1.15" fill="none" stroke-linejoin="miter"/>
<text x="290.9" y="645.1" fill="#f8bc2c" stroke="#f8bc2c" stroke-width="0.35" font-family="Liberation Mono" font-size="8.6" font-weight="normal" font-style="normal" text-anchor="end" textLength="12.6" lengthAdjust="spacingAndGlyphs">SDA</text>
<rect x="508.5" y="367.5" width="60" height="46" stroke="#d95e0f" stroke-width="1.0" fill="#282828"/>
<text x="508.5" y="364.6" fill="#f2e6c2" stroke="#f2e6c2" stroke-width="0.35" font-family="Liberation Mono" font-size="8.6" font-weight="normal" font-style="normal" text-anchor="start" textLength="55.51" lengthAdjust="spacingAndGlyphs">MOTOR_DRIVER1</text>
<text x="508.5" y="420.9" fill="#c8bea2" stroke="#c8bea2" stroke-width="0.35" font-family="Liberation Mono" font-size="8.6" font-weight="normal" font-style="normal" text-anchor="start" textLength="104.16" lengthAdjust="spacingAndGlyphs">File: MOTOR_DRIVER.kicad_sch</text>
<polygon points="568.5,369.8 565.72,369.8 563.7,372.5 565.72,375.2 568.5,375.2" stroke="#f07c1c" stroke-width="1.15" fill="none" stroke-linejoin="miter"/>
<text x="561.9" y="375.1" fill="#f8bc2c" stroke="#f8bc2c" stroke-width="0.35" font-family="Liberation Mono" font-size="8.6" font-weight="normal" font-style="normal" text-anchor="end" textLength="25.2" lengthAdjust="spacingAndGlyphs">PWR_IN</text>
<polygon points="508.5,378.8 511.28,378.8 513.3,381.5 511.28,384.2 508.5,384.2" stroke="#f07c1c" stroke-width="1.15" fill="none" stroke-linejoin="miter"/>
<text x="514.2" y="384.1" fill="#f8bc2c" stroke="#f8bc2c" stroke-width="0.35" font-family="Liberation Mono" font-size="8.6" font-weight="normal" font-style="normal" text-anchor="start" textLength="25.2" lengthAdjust="spacingAndGlyphs">ENABLE</text>
<polygon points="508.5,387.8 511.28,387.8 513.3,390.5 511.28,393.2 508.5,393.2" stroke="#f07c1c" stroke-width="1.15" fill="none" stroke-linejoin="miter"/>
<text x="514.2" y="393.1" fill="#f8bc2c" stroke="#f8bc2c" stroke-width="0.35" font-family="Liberation Mono" font-size="8.6" font-weight="normal" font-style="normal" text-anchor="start" textLength="21" lengthAdjust="spacingAndGlyphs">PHASE</text>
<polygon points="563.7,396.8 566.48,396.8 568.5,399.5 566.48,402.2 563.7,402.2" stroke="#f07c1c" stroke-width="1.15" fill="none" stroke-linejoin="miter"/>
<text x="561.9" y="402.1" fill="#f8bc2c" stroke="#f8bc2c" stroke-width="0.35" font-family="Liberation Mono" font-size="8.6" font-weight="normal" font-style="normal" text-anchor="end" textLength="33.6" lengthAdjust="spacingAndGlyphs">SENSEOUT</text>
<rect x="508.5" y="436.5" width="60" height="46" stroke="#d95e0f" stroke-width="1.0" fill="#282828"/>
<text x="508.5" y="433.6" fill="#f2e6c2" stroke="#f2e6c2" stroke-width="0.35" font-family="Liberation Mono" font-size="8.6" font-weight="normal" font-style="normal" text-anchor="start" textLength="55.51" lengthAdjust="spacingAndGlyphs">MOTOR_DRIVER2</text>
<text x="508.5" y="489.9" fill="#c8bea2" stroke="#c8bea2" stroke-width="0.35" font-family="Liberation Mono" font-size="8.6" font-weight="normal" font-style="normal" text-anchor="start" textLength="104.16" lengthAdjust="spacingAndGlyphs">File: MOTOR_DRIVER.kicad_sch</text>
<polygon points="568.5,437.8 565.72,437.8 563.7,440.5 565.72,443.2 568.5,443.2" stroke="#f07c1c" stroke-width="1.15" fill="none" stroke-linejoin="miter"/>
<text x="561.9" y="443.1" fill="#f8bc2c" stroke="#f8bc2c" stroke-width="0.35" font-family="Liberation Mono" font-size="8.6" font-weight="normal" font-style="normal" text-anchor="end" textLength="25.2" lengthAdjust="spacingAndGlyphs">PWR_IN</text>
<polygon points="508.5,447.8 511.28,447.8 513.3,450.5 511.28,453.2 508.5,453.2" stroke="#f07c1c" stroke-width="1.15" fill="none" stroke-linejoin="miter"/>
<text x="514.2" y="453.1" fill="#f8bc2c" stroke="#f8bc2c" stroke-width="0.35" font-family="Liberation Mono" font-size="8.6" font-weight="normal" font-style="normal" text-anchor="start" textLength="25.2" lengthAdjust="spacingAndGlyphs">ENABLE</text>
<polygon points="508.5,456.8 511.28,456.8 513.3,459.5 511.28,462.2 508.5,462.2" stroke="#f07c1c" stroke-width="1.15" fill="none" stroke-linejoin="miter"/>
<text x="514.2" y="462.1" fill="#f8bc2c" stroke="#f8bc2c" stroke-width="0.35" font-family="Liberation Mono" font-size="8.6" font-weight="normal" font-style="normal" text-anchor="start" textLength="21" lengthAdjust="spacingAndGlyphs">PHASE</text>
<polygon points="563.7,465.8 566.48,465.8 568.5,468.5 566.48,471.2 563.7,471.2" stroke="#f07c1c" stroke-width="1.15" fill="none" stroke-linejoin="miter"/>
<text x="561.9" y="471.1" fill="#f8bc2c" stroke="#f8bc2c" stroke-width="0.35" font-family="Liberation Mono" font-size="8.6" font-weight="normal" font-style="normal" text-anchor="end" textLength="33.6" lengthAdjust="spacingAndGlyphs">SENSEOUT</text>
<rect x="508.5" y="505.5" width="60" height="46" stroke="#d95e0f" stroke-width="1.0" fill="#282828"/>
<text x="508.5" y="502.6" fill="#f2e6c2" stroke="#f2e6c2" stroke-width="0.35" font-family="Liberation Mono" font-size="8.6" font-weight="normal" font-style="normal" text-anchor="start" textLength="55.51" lengthAdjust="spacingAndGlyphs">MOTOR_DRIVER3</text>
<text x="508.5" y="558.9" fill="#c8bea2" stroke="#c8bea2" stroke-width="0.35" font-family="Liberation Mono" font-size="8.6" font-weight="normal" font-style="normal" text-anchor="start" textLength="104.16" lengthAdjust="spacingAndGlyphs">File: MOTOR_DRIVER.kicad_sch</text>
<polygon points="568.5,506.8 565.72,506.8 563.7,509.5 565.72,512.2 568.5,512.2" stroke="#f07c1c" stroke-width="1.15" fill="none" stroke-linejoin="miter"/>
<text x="561.9" y="512.1" fill="#f8bc2c" stroke="#f8bc2c" stroke-width="0.35" font-family="Liberation Mono" font-size="8.6" font-weight="normal" font-style="normal" text-anchor="end" textLength="25.2" lengthAdjust="spacingAndGlyphs">PWR_IN</text>
<polygon points="508.5,515.8 511.28,515.8 513.3,518.5 511.28,521.2 508.5,521.2" stroke="#f07c1c" stroke-width="1.15" fill="none" stroke-linejoin="miter"/>
<text x="514.2" y="521.1" fill="#f8bc2c" stroke="#f8bc2c" stroke-width="0.35" font-family="Liberation Mono" font-size="8.6" font-weight="normal" font-style="normal" text-anchor="start" textLength="25.2" lengthAdjust="spacingAndGlyphs">ENABLE</text>
<polygon points="508.5,525.8 511.28,525.8 513.3,528.5 511.28,531.2 508.5,531.2" stroke="#f07c1c" stroke-width="1.15" fill="none" stroke-linejoin="miter"/>
<text x="514.2" y="531.1" fill="#f8bc2c" stroke="#f8bc2c" stroke-width="0.35" font-family="Liberation Mono" font-size="8.6" font-weight="normal" font-style="normal" text-anchor="start" textLength="21" lengthAdjust="spacingAndGlyphs">PHASE</text>
<polygon points="563.7,534.8 566.48,534.8 568.5,537.5 566.48,540.2 563.7,540.2" stroke="#f07c1c" stroke-width="1.15" fill="none" stroke-linejoin="miter"/>
<text x="561.9" y="540.1" fill="#f8bc2c" stroke="#f8bc2c" stroke-width="0.35" font-family="Liberation Mono" font-size="8.6" font-weight="normal" font-style="normal" text-anchor="end" textLength="33.6" lengthAdjust="spacingAndGlyphs">SENSEOUT</text>
<rect x="508.5" y="573.5" width="60" height="46" stroke="#d95e0f" stroke-width="1.0" fill="#282828"/>
<text x="508.5" y="570.6" fill="#f2e6c2" stroke="#f2e6c2" stroke-width="0.35" font-family="Liberation Mono" font-size="8.6" font-weight="normal" font-style="normal" text-anchor="start" textLength="55.51" lengthAdjust="spacingAndGlyphs">MOTOR_DRIVER4</text>
<text x="508.5" y="626.9" fill="#c8bea2" stroke="#c8bea2" stroke-width="0.35" font-family="Liberation Mono" font-size="8.6" font-weight="normal" font-style="normal" text-anchor="start" textLength="104.16" lengthAdjust="spacingAndGlyphs">File: MOTOR_DRIVER.kicad_sch</text>
<polygon points="568.5,575.8 565.72,575.8 563.7,578.5 565.72,581.2 568.5,581.2" stroke="#f07c1c" stroke-width="1.15" fill="none" stroke-linejoin="miter"/>
<text x="561.9" y="581.1" fill="#f8bc2c" stroke="#f8bc2c" stroke-width="0.35" font-family="Liberation Mono" font-size="8.6" font-weight="normal" font-style="normal" text-anchor="end" textLength="25.2" lengthAdjust="spacingAndGlyphs">PWR_IN</text>
<polygon points="508.5,584.8 511.28,584.8 513.3,587.5 511.28,590.2 508.5,590.2" stroke="#f07c1c" stroke-width="1.15" fill="none" stroke-linejoin="miter"/>
<text x="514.2" y="590.1" fill="#f8bc2c" stroke="#f8bc2c" stroke-width="0.35" font-family="Liberation Mono" font-size="8.6" font-weight="normal" font-style="normal" text-anchor="start" textLength="25.2" lengthAdjust="spacingAndGlyphs">ENABLE</text>
<polygon points="508.5,593.8 511.28,593.8 513.3,596.5 511.28,599.2 508.5,599.2" stroke="#f07c1c" stroke-width="1.15" fill="none" stroke-linejoin="miter"/>
<text x="514.2" y="599.1" fill="#f8bc2c" stroke="#f8bc2c" stroke-width="0.35" font-family="Liberation Mono" font-size="8.6" font-weight="normal" font-style="normal" text-anchor="start" textLength="21" lengthAdjust="spacingAndGlyphs">PHASE</text>
<polygon points="563.7,603.8 566.48,603.8 568.5,606.5 566.48,609.2 563.7,609.2" stroke="#f07c1c" stroke-width="1.15" fill="none" stroke-linejoin="miter"/>
<text x="561.9" y="609.1" fill="#f8bc2c" stroke="#f8bc2c" stroke-width="0.35" font-family="Liberation Mono" font-size="8.6" font-weight="normal" font-style="normal" text-anchor="end" textLength="33.6" lengthAdjust="spacingAndGlyphs">SENSEOUT</text>
<polyline points="316.5,161.5 394.5,161.5" stroke="#78a66c" stroke-width="1.0" fill="none" stroke-linejoin="miter"/>
<polyline points="316.5,170.5 394.5,170.5" stroke="#78a66c" stroke-width="1.0" fill="none" stroke-linejoin="miter"/>
<polyline points="251.5,239.5 251.5,339.5" stroke="#78a66c" stroke-width="1.0" fill="none" stroke-linejoin="miter"/>
<polyline points="261.5,239.5 261.5,339.5" stroke="#78a66c" stroke-width="1.0" fill="none" stroke-linejoin="miter"/>
<polyline points="288.5,239.5 288.5,339.5" stroke="#78a66c" stroke-width="1.0" fill="none" stroke-linejoin="miter"/>
<polyline points="297.5,239.5 297.5,339.5" stroke="#78a66c" stroke-width="1.0" fill="none" stroke-linejoin="miter"/>
<polyline points="270.5,239.5 270.5,253" stroke="#78a66c" stroke-width="1.0" fill="none" stroke-linejoin="miter"/>
<polyline points="407.5,243.5 407.5,257" stroke="#78a66c" stroke-width="1.0" fill="none" stroke-linejoin="miter"/>
<polyline points="421.5,243.5 421.5,633.5 297.5,633.5" stroke="#78a66c" stroke-width="1.0" fill="none" stroke-linejoin="miter"/>
<polyline points="430.5,243.5 430.5,642.5 297.5,642.5" stroke="#78a66c" stroke-width="1.0" fill="none" stroke-linejoin="miter"/>
<polyline points="316.5,404.5 421.5,404.5" stroke="#78a66c" stroke-width="1.0" fill="none" stroke-linejoin="miter"/>
<polyline points="316.5,413.5 430.5,413.5" stroke="#78a66c" stroke-width="1.0" fill="none" stroke-linejoin="miter"/>
<polyline points="196.5,560.5 196.5,615.5" stroke="#78a66c" stroke-width="1.0" fill="none" stroke-linejoin="miter"/>
<polyline points="205.5,560.5 205.5,615.5" stroke="#78a66c" stroke-width="1.0" fill="none" stroke-linejoin="miter"/>
<polyline points="215.5,560.5 215.5,615.5" stroke="#78a66c" stroke-width="1.0" fill="none" stroke-linejoin="miter"/>
<polyline points="233.5,560.5 233.5,615.5" stroke="#78a66c" stroke-width="1.0" fill="none" stroke-linejoin="miter"/>
<polyline points="242.5,560.5 242.5,615.5" stroke="#78a66c" stroke-width="1.0" fill="none" stroke-linejoin="miter"/>
<polyline points="251.5,560.5 251.5,615.5" stroke="#78a66c" stroke-width="1.0" fill="none" stroke-linejoin="miter"/>
<polyline points="261.5,560.5 261.5,615.5" stroke="#78a66c" stroke-width="1.0" fill="none" stroke-linejoin="miter"/>
<polyline points="270.5,560.5 270.5,615.5" stroke="#78a66c" stroke-width="1.0" fill="none" stroke-linejoin="miter"/>
<polyline points="316.5,482.5 453.5,482.5 453.5,381.5 508.5,381.5" stroke="#78a66c" stroke-width="1.0" fill="none" stroke-linejoin="miter"/>
<polyline points="316.5,491.5 462.5,491.5 462.5,390.5 508.5,390.5" stroke="#78a66c" stroke-width="1.0" fill="none" stroke-linejoin="miter"/>
<polyline points="316.5,500.5 472.5,500.5 472.5,450.5 508.5,450.5" stroke="#78a66c" stroke-width="1.0" fill="none" stroke-linejoin="miter"/>
<polyline points="316.5,509.5 481.5,509.5 481.5,459.5 508.5,459.5" stroke="#78a66c" stroke-width="1.0" fill="none" stroke-linejoin="miter"/>
<polyline points="316.5,518.5 508.5,518.5" stroke="#78a66c" stroke-width="1.0" fill="none" stroke-linejoin="miter"/>
<polyline points="316.5,528.5 508.5,528.5" stroke="#78a66c" stroke-width="1.0" fill="none" stroke-linejoin="miter"/>
<polyline points="316.5,537.5 481.5,537.5 481.5,587.5 508.5,587.5" stroke="#78a66c" stroke-width="1.0" fill="none" stroke-linejoin="miter"/>
<polyline points="316.5,546.5 472.5,546.5 472.5,596.5 508.5,596.5" stroke="#78a66c" stroke-width="1.0" fill="none" stroke-linejoin="miter"/>
<polyline points="591.5,243.5 591.5,399.5 568.5,399.5" stroke="#78a66c" stroke-width="1.0" fill="none" stroke-linejoin="miter"/>
<polyline points="600.5,243.5 600.5,468.5 568.5,468.5" stroke="#78a66c" stroke-width="1.0" fill="none" stroke-linejoin="miter"/>
<polyline points="609.5,243.5 609.5,537.5 568.5,537.5" stroke="#78a66c" stroke-width="1.0" fill="none" stroke-linejoin="miter"/>
<polyline points="618.5,243.5 618.5,606.5 568.5,606.5" stroke="#78a66c" stroke-width="1.0" fill="none" stroke-linejoin="miter"/>
<polyline points="568.5,372.5 582.5,372.5 582.5,362" stroke="#78a66c" stroke-width="1.0" fill="none" stroke-linejoin="miter"/>
<polyline points="582.5,362 582.5,353" stroke="#86aca2" stroke-width="1.1" fill="none" stroke-linejoin="miter"/>
<polyline points="579.7,358.6 582.5,353 585.3,358.6" stroke="#86aca2" stroke-width="1.1" fill="none" stroke-linejoin="miter"/>
<text x="569" y="349.8" fill="#f2e6c2" stroke="#f2e6c2" stroke-width="0.35" font-family="Liberation Mono" font-size="8.6" font-weight="normal" font-style="normal" text-anchor="start" textLength="27" lengthAdjust="spacingAndGlyphs">+VPWR1</text>
<polyline points="568.5,440.5 582.5,440.5 582.5,440" stroke="#78a66c" stroke-width="1.0" fill="none" stroke-linejoin="miter"/>
<polyline points="582.5,440 582.5,431" stroke="#86aca2" stroke-width="1.1" fill="none" stroke-linejoin="miter"/>
<polyline points="579.7,436.6 582.5,431 585.3,436.6" stroke="#86aca2" stroke-width="1.1" fill="none" stroke-linejoin="miter"/>
<text x="569" y="427.8" fill="#f2e6c2" stroke="#f2e6c2" stroke-width="0.35" font-family="Liberation Mono" font-size="8.6" font-weight="normal" font-style="normal" text-anchor="start" textLength="27" lengthAdjust="spacingAndGlyphs">+VPWR1</text>
<polyline points="568.5,509.5 582.5,509.5 582.5,509" stroke="#78a66c" stroke-width="1.0" fill="none" stroke-linejoin="miter"/>
<polyline points="582.5,509 582.5,500" stroke="#86aca2" stroke-width="1.1" fill="none" stroke-linejoin="miter"/>
<polyline points="579.7,505.6 582.5,500 585.3,505.6" stroke="#86aca2" stroke-width="1.1" fill="none" stroke-linejoin="miter"/>
<text x="569" y="496.8" fill="#f2e6c2" stroke="#f2e6c2" stroke-width="0.35" font-family="Liberation Mono" font-size="8.6" font-weight="normal" font-style="normal" text-anchor="start" textLength="27" lengthAdjust="spacingAndGlyphs">+VPWR2</text>
<polyline points="568.5,578.5 582.5,578.5 582.5,578" stroke="#78a66c" stroke-width="1.0" fill="none" stroke-linejoin="miter"/>
<polyline points="582.5,578 582.5,569" stroke="#86aca2" stroke-width="1.1" fill="none" stroke-linejoin="miter"/>
<polyline points="579.7,574.6 582.5,569 585.3,574.6" stroke="#86aca2" stroke-width="1.1" fill="none" stroke-linejoin="miter"/>
<text x="569" y="565.8" fill="#f2e6c2" stroke="#f2e6c2" stroke-width="0.35" font-family="Liberation Mono" font-size="8.6" font-weight="normal" font-style="normal" text-anchor="start" textLength="27" lengthAdjust="spacingAndGlyphs">+VPWR2</text>
<circle cx="421.5" cy="404.5" r="2.2" fill="#86b87a"/>
<circle cx="430.5" cy="413.5" r="2.2" fill="#86b87a"/>
<line x1="267.9" y1="250.4" x2="273.1" y2="255.6" stroke="#ff4a30" stroke-width="1.2"/>
<line x1="267.9" y1="255.6" x2="273.1" y2="250.4" stroke="#ff4a30" stroke-width="1.2"/>
<line x1="404.9" y1="254.4" x2="410.1" y2="259.6" stroke="#ff4a30" stroke-width="1.2"/>
<line x1="404.9" y1="259.6" x2="410.1" y2="254.4" stroke="#ff4a30" stroke-width="1.2"/>
<circle cx="352.5" cy="711.5" r="4.9" fill="none" stroke="#7fa394" stroke-width="4.8"/>
<polyline points="352.5,718.8 352.5,728.9" stroke="#78a66c" stroke-width="1.0" fill="none" stroke-linejoin="miter"/>
<polygon points="347.7,728.9 357.3,728.9 352.5,734.6" stroke="#86aca2" stroke-width="1.0" fill="none" stroke-linejoin="miter"/>
<text x="343.9" y="746.4" fill="#f2e6c2" stroke="#f2e6c2" stroke-width="0.35" font-family="Liberation Mono" font-size="8.6" font-weight="normal" font-style="normal" text-anchor="start" textLength="18.2" lengthAdjust="spacingAndGlyphs">GND2</text>
<text x="362.7" y="710" fill="#f2e6c2" stroke="#f2e6c2" stroke-width="0.35" font-family="Liberation Mono" font-size="8.6" font-weight="normal" font-style="normal" text-anchor="start" textLength="8.8" lengthAdjust="spacingAndGlyphs">H1</text>
<text x="362.7" y="718.6" fill="#f2e6c2" stroke="#f2e6c2" stroke-width="0.35" font-family="Liberation Mono" font-size="8.6" font-weight="normal" font-style="normal" text-anchor="start" textLength="8.8" lengthAdjust="spacingAndGlyphs">M3</text>
<circle cx="384.5" cy="711.5" r="4.9" fill="none" stroke="#7fa394" stroke-width="4.8"/>
<polyline points="384.5,718.8 384.5,728.9" stroke="#78a66c" stroke-width="1.0" fill="none" stroke-linejoin="miter"/>
<polygon points="379.7,728.9 389.3,728.9 384.5,734.6" stroke="#86aca2" stroke-width="1.0" fill="none" stroke-linejoin="miter"/>
<text x="375.9" y="746.4" fill="#f2e6c2" stroke="#f2e6c2" stroke-width="0.35" font-family="Liberation Mono" font-size="8.6" font-weight="normal" font-style="normal" text-anchor="start" textLength="18.2" lengthAdjust="spacingAndGlyphs">GND2</text>
<text x="394.7" y="710" fill="#f2e6c2" stroke="#f2e6c2" stroke-width="0.35" font-family="Liberation Mono" font-size="8.6" font-weight="normal" font-style="normal" text-anchor="start" textLength="8.8" lengthAdjust="spacingAndGlyphs">H2</text>
<text x="394.7" y="718.6" fill="#f2e6c2" stroke="#f2e6c2" stroke-width="0.35" font-family="Liberation Mono" font-size="8.6" font-weight="normal" font-style="normal" text-anchor="start" textLength="8.8" lengthAdjust="spacingAndGlyphs">M3</text>
<circle cx="416.6" cy="711.5" r="4.9" fill="none" stroke="#7fa394" stroke-width="4.8"/>
<polyline points="416.6,718.8 416.6,728.9" stroke="#78a66c" stroke-width="1.0" fill="none" stroke-linejoin="miter"/>
<polygon points="411.8,728.9 421.4,728.9 416.6,734.6" stroke="#86aca2" stroke-width="1.0" fill="none" stroke-linejoin="miter"/>
<text x="408" y="746.4" fill="#f2e6c2" stroke="#f2e6c2" stroke-width="0.35" font-family="Liberation Mono" font-size="8.6" font-weight="normal" font-style="normal" text-anchor="start" textLength="18.2" lengthAdjust="spacingAndGlyphs">GND2</text>
<text x="426.8" y="710" fill="#f2e6c2" stroke="#f2e6c2" stroke-width="0.35" font-family="Liberation Mono" font-size="8.6" font-weight="normal" font-style="normal" text-anchor="start" textLength="8.8" lengthAdjust="spacingAndGlyphs">H3</text>
<text x="426.8" y="718.6" fill="#f2e6c2" stroke="#f2e6c2" stroke-width="0.35" font-family="Liberation Mono" font-size="8.6" font-weight="normal" font-style="normal" text-anchor="start" textLength="8.8" lengthAdjust="spacingAndGlyphs">M3</text>
<circle cx="449.1" cy="711.5" r="4.9" fill="none" stroke="#7fa394" stroke-width="4.8"/>
<polyline points="449.1,718.8 449.1,728.9" stroke="#78a66c" stroke-width="1.0" fill="none" stroke-linejoin="miter"/>
<polygon points="444.3,728.9 453.9,728.9 449.1,734.6" stroke="#86aca2" stroke-width="1.0" fill="none" stroke-linejoin="miter"/>
<text x="440.5" y="746.4" fill="#f2e6c2" stroke="#f2e6c2" stroke-width="0.35" font-family="Liberation Mono" font-size="8.6" font-weight="normal" font-style="normal" text-anchor="start" textLength="18.2" lengthAdjust="spacingAndGlyphs">GND2</text>
<text x="459.3" y="718.6" fill="#f2e6c2" stroke="#f2e6c2" stroke-width="0.35" font-family="Liberation Mono" font-size="8.6" font-weight="normal" font-style="normal" text-anchor="start" textLength="8.8" lengthAdjust="spacingAndGlyphs">M3</text>
<text x="458.9" y="709.8" fill="#f2e6c2" stroke="#f2e6c2" stroke-width="0.35" font-family="Liberation Mono" font-size="8.6" font-weight="normal" font-style="normal" text-anchor="start" textLength="7.6" lengthAdjust="spacingAndGlyphs">H4</text>
<text x="466" y="709.8" fill="#f2e6c2" stroke="#f2e6c2" stroke-width="0.35" font-family="Liberation Mono" font-size="8.6" font-weight="normal" font-style="normal" text-anchor="start" textLength="64" lengthAdjust="spacingAndGlyphs">Jumper_2_Bridged</text>
<text x="493.3" y="699.9" fill="#f2e6c2" stroke="#f2e6c2" stroke-width="0.35" font-family="Liberation Mono" font-size="8.6" font-weight="normal" font-style="normal" text-anchor="start" textLength="12" lengthAdjust="spacingAndGlyphs">JP5</text>
<polyline points="481.5,720 481.5,716.5 490.2,716.5" stroke="#78a66c" stroke-width="1.0" fill="none" stroke-linejoin="miter"/>
<polyline points="508.4,716.5 517.5,716.5 517.5,720" stroke="#78a66c" stroke-width="1.0" fill="none" stroke-linejoin="miter"/>
<circle cx="492.3" cy="716.5" r="2.1" fill="none" stroke="#86aca2" stroke-width="1"/>
<circle cx="506.3" cy="716.5" r="2.1" fill="none" stroke="#86aca2" stroke-width="1"/>
<path d="M493.5,714.5 Q499.3,711.1 505.1,714.5" fill="none" stroke="#86aca2" stroke-width="1"/>
<polygon points="476.7,720.2 486.3,720.2 481.5,725.6" stroke="#86aca2" stroke-width="1.0" fill="none" stroke-linejoin="miter"/>
<polygon points="512.7,720.2 522.3,720.2 517.5,725.6" stroke="#86aca2" stroke-width="1.0" fill="none" stroke-linejoin="miter"/>
<text x="472" y="737.6" fill="#f2e6c2" stroke="#f2e6c2" stroke-width="0.35" font-family="Liberation Mono" font-size="8.6" font-weight="normal" font-style="normal" text-anchor="start" textLength="18.2" lengthAdjust="spacingAndGlyphs">GND2</text>
<text x="510.8" y="737.6" fill="#f2e6c2" stroke="#f2e6c2" stroke-width="0.35" font-family="Liberation Mono" font-size="8.6" font-weight="normal" font-style="normal" text-anchor="start" textLength="13.8" lengthAdjust="spacingAndGlyphs">GND</text>
<line x1="443.5" y1="0" x2="443.5" y2="845" stroke="#978e7c" stroke-width="1.0"/>
<line x1="0" y1="444.5" x2="826" y2="444.5" stroke="#978e7c" stroke-width="1.0"/>
</svg>
</body></html>
